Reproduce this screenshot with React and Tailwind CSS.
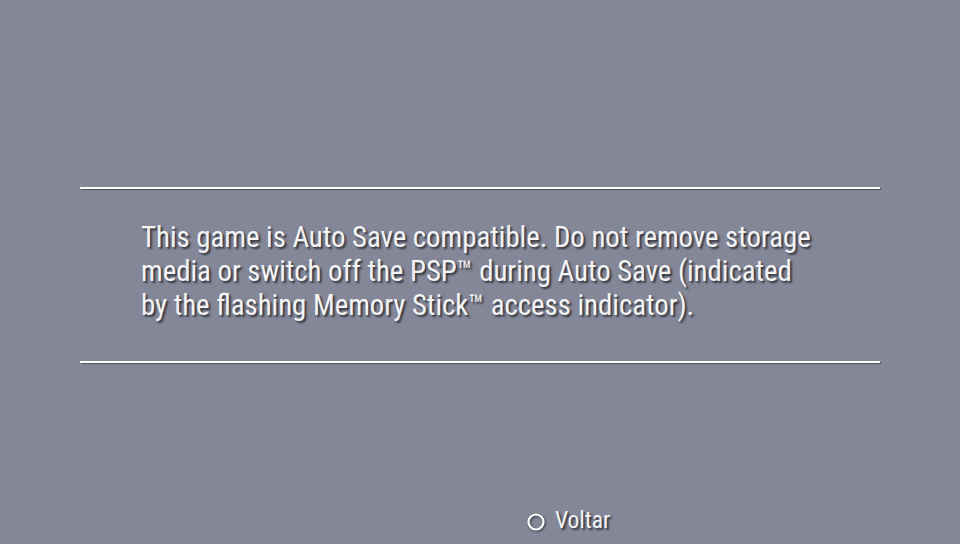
export default function App() {
  const shadow = { textShadow: "2px 2px 2px rgba(30,32,40,0.8)" };
  return (
    <div className="w-[960px] h-[544px] bg-[#848797] flex flex-col overflow-hidden" style={{ fontFamily: "Roboto, 'Noto Sans', sans-serif" }}>
      <div className="h-[187px]" />
      <div className="mx-[80px] h-[2px] bg-white shadow-[1px_1px_1px_rgba(30,32,40,0.5)]" />
      <div className="h-[172px] pl-[141px] pt-[31px]">
        <p className="text-[#f4f4f4] text-[28.8px] leading-[34px] [font-stretch:condensed]" style={shadow}>
          This game is Auto Save compatible. Do not remove storage<br />
          media or switch off the PSP™ during Auto Save (indicated<br />
          by the flashing Memory Stick™ access indicator).
        </p>
      </div>
      <div className="mx-[80px] h-[2px] bg-white shadow-[1px_1px_1px_rgba(30,32,40,0.5)]" />
      <div className="flex-1 flex items-end justify-center pb-[10px] pl-[176px]">
        <div className="flex items-center gap-[9px]">
          <svg width="20" height="20" viewBox="0 0 20 20" className="mt-[4px]" style={{ filter: "drop-shadow(1px 1px 1px rgba(30,32,40,0.8))" }}>
            <circle cx="10" cy="10" r="7.5" fill="none" stroke="white" strokeWidth="2.2" />
          </svg>
          <span className="text-[#f4f4f4] text-[23.5px] leading-[28px] [font-stretch:condensed]" style={shadow}>Voltar</span>
        </div>
      </div>
    </div>
  );
}
